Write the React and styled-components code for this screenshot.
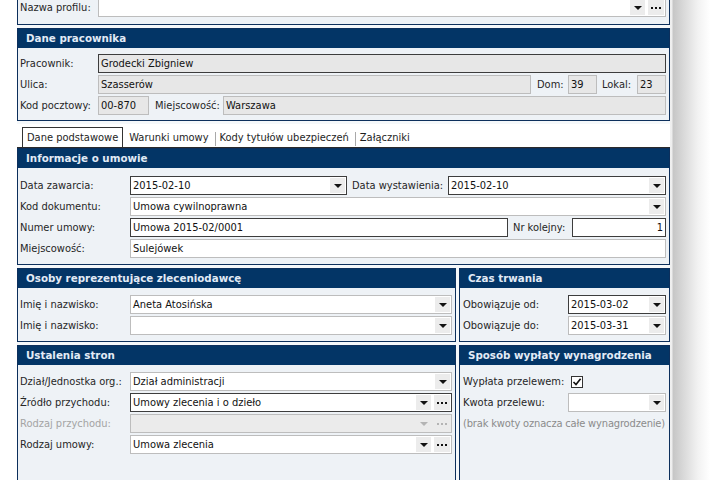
import React from 'react';
import styled, { createGlobalStyle } from 'styled-components';

const GlobalStyle = createGlobalStyle`
  html, body {
    margin: 0;
    padding: 0;
    background: #fff;
  }
  body {
    font-family: "DejaVu Sans Condensed", "Liberation Sans", sans-serif;
    font-size: 11px;
    color: #1e1e1e;
    overflow: hidden;
  }
`;

const Page = styled.div`
  display: flex;
  width: 718px;
  height: 480px;
  overflow: hidden;
  padding-left: 17px;
  box-sizing: border-box;
`;

const Window = styled.div`
  width: 653px;
  flex: none;
  margin-top: -10px;
  display: flex;
  flex-direction: column;
  gap: 3px;
  background: #f5f8fa;

  & > * {
    flex: none;
  }
`;

const Shadow = styled.div`
  flex: 1;
  background: linear-gradient(
    to right,
    #f0f0f0 0,
    #eeeeee 2px,
    #c6c6c6 3px,
    #dadada 14px,
    #f2f2f2 28px,
    #ffffff 40px
  );
`;

const Panel = styled.section`
  border: 1px solid #0c2f5c;
  background: #eef2f6;
  min-height: ${(p) => p.$minH || 0}px;
`;

const PanelHeader = styled.div`
  height: 19px;
  background: #033566;
  color: #e2ebf6;
  font-family: "DejaVu Sans", "Liberation Sans", sans-serif;
  font-weight: bold;
  font-size: 10.3px;
  line-height: 19px;
  padding-left: 8px;
  white-space: nowrap;
`;

const Body = styled.div`
  display: flex;
  flex-direction: column;
  gap: 2px;
  padding: ${(p) => p.$pt || 7}px 3px ${(p) => p.$pb || 6}px ${(p) => p.$pl || 2}px;
`;

const Row = styled.div`
  display: flex;
  align-items: center;
  height: 19px;
  flex: none;
`;

const Label = styled.span`
  width: ${(p) => p.$w}px;
  flex: none;
  margin-left: ${(p) => p.$ml || 0}px;
  color: ${(p) => (p.$disabled ? '#a4a4a4' : '#262626')};
  white-space: nowrap;
`;

const Note = styled.div`
  color: #8b8b8b;
  height: 19px;
  line-height: 19px;
  letter-spacing: -0.15px;
  white-space: nowrap;
`;

const fieldBg = (p) => {
  if (p.$ro) return '#e7e7e7';
  if (p.$disabled) return '#ebebeb';
  return '#ffffff';
};

const Field = styled.div`
  height: 19px;
  box-sizing: border-box;
  border: 1px solid ${(p) => (p.$dark ? '#3d3d3d' : '#bdbdbd')};
  background: ${fieldBg};
  display: flex;
  align-items: center;
  ${(p) => (p.$w ? `width: ${p.$w}px; flex: none;` : 'flex: 1; min-width: 0;')}
`;

const FieldText = styled.span`
  flex: 1;
  padding: 0 2px;
  white-space: nowrap;
  overflow: hidden;
  color: #111;
  text-align: ${(p) => (p.$right ? 'right' : 'left')};
`;

const DropBtn = styled.span`
  width: 15px;
  height: 15px;
  margin-right: 1px;
  flex: none;
  background: ${(p) => (p.$disabled ? 'transparent' : '#ececec')};
  display: flex;
  align-items: center;
  justify-content: center;

  &::after {
    content: '';
    border-left: 4px solid transparent;
    border-right: 4px solid transparent;
    border-top: 4px solid ${(p) => (p.$disabled ? '#b4b4b4' : '#111')};
  }
`;

const MoreBtn = styled.span`
  width: 16px;
  height: 15px;
  margin-right: 1px;
  margin-left: 2px;
  flex: none;
  background: ${(p) => (p.$disabled ? 'transparent' : '#ececec')};
  display: flex;
  align-items: center;
  justify-content: center;

  &::after {
    content: '';
    width: 2px;
    height: 2px;
    background: ${(p) => (p.$disabled ? '#b4b4b4' : '#111')};
    box-shadow: 4px 0 ${(p) => (p.$disabled ? '#b4b4b4' : '#111')},
      -4px 0 ${(p) => (p.$disabled ? '#b4b4b4' : '#111')};
  }
`;

const Check = styled.span`
  width: 12px;
  height: 12px;
  box-sizing: border-box;
  border: 1px solid #333;
  background: #fff;
  margin-left: 3px;
  display: flex;
  align-items: center;
  justify-content: center;
`;

const TabStrip = styled.div`
  height: 24px;
  margin-bottom: -3px;
  box-sizing: border-box;
  background: #fff;
  border-bottom: 1px solid #2b2b2b;
  display: flex;
  align-items: flex-end;
  padding-left: 5px;
`;

const Tab = styled.div`
  height: 20px;
  line-height: 19px;
  box-sizing: border-box;
  white-space: nowrap;
  padding: 0 4px;
  background: #fff;
  position: relative;
  border: 1px solid ${(p) => (p.$active ? '#333' : 'transparent')};
  border-bottom: none;

  & + & {
    margin-left: 1px;
  }
  & + &::before {
    content: '';
    position: absolute;
    left: -1px;
    top: 4px;
    height: 14px;
    border-left: 1px solid #a9a9a9;
  }
`;

const Columns = styled.div`
  display: grid;
  grid-template-columns: 439px 211px;
  column-gap: 3px;
  row-gap: 3px;
`;

const Input = ({ value, dark, ro, disabled, w, drop, more, right }) => (
  <Field $dark={dark} $ro={ro} $disabled={disabled} $w={w}>
    <FieldText $right={right}>{value}</FieldText>
    {drop && <DropBtn $disabled={disabled} />}
    {more && <MoreBtn $disabled={disabled} />}
  </Field>
);

const App = () => {
  return (
    <>
      <GlobalStyle />
      <Page>
        <Window>
          <Panel>
            <Body $pt={7} $pb={7}>
              <Row>
                <Label $w={78}>Nazwa profilu:</Label>
                <Input value="" drop more />
              </Row>
            </Body>
          </Panel>

          <Panel>
            <PanelHeader>Dane pracownika</PanelHeader>
            <Body $pt={6} $pb={5}>
              <Row>
                <Label $w={78}>Pracownik:</Label>
                <Input value="Grodecki Zbigniew" ro dark />
              </Row>
              <Row>
                <Label $w={78}>Ulica:</Label>
                <Input value="Szasserów" ro />
                <Label $w={31} $ml={6}>Dom:</Label>
                <Input value="39" ro w={29} />
                <Label $w={35} $ml={5}>Lokal:</Label>
                <Input value="23" ro w={29} />
              </Row>
              <Row>
                <Label $w={78}>Kod pocztowy:</Label>
                <Input value="00-870" ro w={51} />
                <Label $w={68} $ml={6}>Miejscowość:</Label>
                <Input value="Warszawa" ro />
              </Row>
            </Body>
          </Panel>

          <TabStrip>
            <Tab $active>Dane podstawowe</Tab>
            <Tab>Warunki umowy</Tab>
            <Tab>Kody tytułów ubezpieczeń</Tab>
            <Tab>Załączniki</Tab>
          </TabStrip>

          <Panel>
            <PanelHeader>Informacje o umowie</PanelHeader>
            <Body $pt={8} $pb={6}>
              <Row>
                <Label $w={110}>Data zawarcia:</Label>
                <Input value="2015-02-10" dark drop />
                <Label $w={96} $ml={5}>Data wystawienia:</Label>
                <Input value="2015-02-10" dark drop w={218} />
              </Row>
              <Row>
                <Label $w={110}>Kod dokumentu:</Label>
                <Input value="Umowa cywilnoprawna" drop />
              </Row>
              <Row>
                <Label $w={110}>Numer umowy:</Label>
                <Input value="Umowa 2015-02/0001" dark />
                <Label $w={59} $ml={5}>Nr kolejny:</Label>
                <Input value="1" dark right w={94} />
              </Row>
              <Row>
                <Label $w={110}>Miejscowość:</Label>
                <Input value="Sulejówek" />
              </Row>
            </Body>
          </Panel>

          <Columns>
            <Panel>
              <PanelHeader>Osoby reprezentujące zleceniodawcę</PanelHeader>
              <Body>
                <Row>
                  <Label $w={110}>Imię i nazwisko:</Label>
                  <Input value="Aneta Atosińska" drop />
                </Row>
                <Row>
                  <Label $w={110}>Imię i nazwisko:</Label>
                  <Input value="" drop />
                </Row>
              </Body>
            </Panel>

            <Panel>
              <PanelHeader>Czas trwania</PanelHeader>
              <Body $pl={3}>
                <Row>
                  <Label $w={105}>Obowiązuje od:</Label>
                  <Input value="2015-03-02" dark drop />
                </Row>
                <Row>
                  <Label $w={105}>Obowiązuje do:</Label>
                  <Input value="2015-03-31" drop />
                </Row>
              </Body>
            </Panel>

            <Panel $minH={160}>
              <PanelHeader>Ustalenia stron</PanelHeader>
              <Body>
                <Row>
                  <Label $w={110}>Dział/Jednostka org.:</Label>
                  <Input value="Dział administracji" drop />
                </Row>
                <Row>
                  <Label $w={110}>Źródło przychodu:</Label>
                  <Input value="Umowy zlecenia i o dzieło" dark drop more />
                </Row>
                <Row>
                  <Label $w={110} $disabled>Rodzaj przychodu:</Label>
                  <Input value="" disabled drop more />
                </Row>
                <Row>
                  <Label $w={110}>Rodzaj umowy:</Label>
                  <Input value="Umowa zlecenia" drop more />
                </Row>
              </Body>
            </Panel>

            <Panel $minH={160}>
              <PanelHeader>Sposób wypłaty wynagrodzenia</PanelHeader>
              <Body $pl={3}>
                <Row>
                  <Label $w={105}>Wypłata przelewem:</Label>
                  <Check>
                    <svg width="10" height="10" viewBox="0 0 10 10">
                      <path d="M1.5 5 L4 7.6 L8.6 1.8" fill="none" stroke="#111" strokeWidth="1.6" />
                    </svg>
                  </Check>
                </Row>
                <Row>
                  <Label $w={105}>Kwota przelewu:</Label>
                  <Input value="" drop />
                </Row>
                <Note>(brak kwoty oznacza całe wynagrodzenie)</Note>
              </Body>
            </Panel>
          </Columns>
        </Window>
        <Shadow />
      </Page>
    </>
  );
};

export default App;
